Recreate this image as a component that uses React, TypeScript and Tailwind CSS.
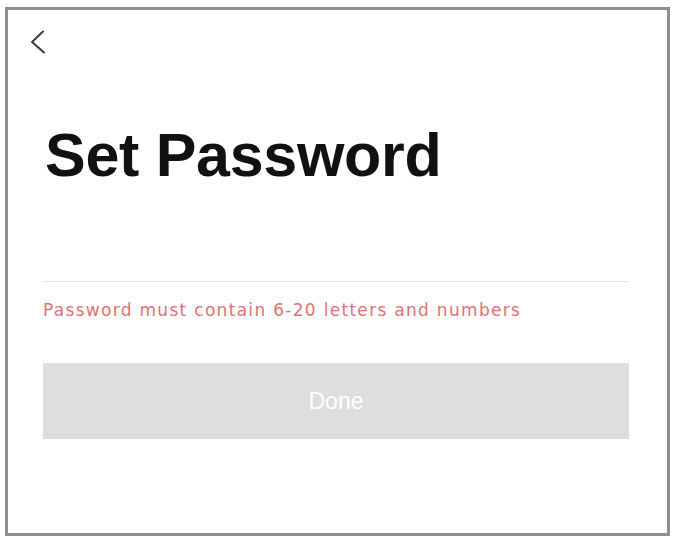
const App = () => {
  return (
    <div className="w-[673px] h-[537px] bg-white pt-[7px] pl-[5px]">
      <div className="w-[665px] h-[529px] border-[3px] border-[#8e8e8e] bg-white flex flex-col px-[35px]">
        <div className="mt-[20px] -ml-[14px] h-[24px]">
          <svg width="18" height="24" viewBox="0 0 18 24" fill="none">
            <path d="M14 1.5 L3 12 L15 22.5" stroke="#3a3a3a" strokeWidth="2" strokeLinecap="round" strokeLinejoin="round" />
          </svg>
        </div>
        <h1 className="mt-[71px] ml-[2px] text-[61px] leading-none font-bold text-[#111] tracking-[-0.3px] font-['Liberation_Sans',Arial,sans-serif]">
          Set Password
        </h1>
        <div className="mt-[95px] h-px bg-[#e4e4e4] w-[586px]"></div>
        <p className="mt-[20px] text-[17px] leading-none text-[#e27272] tracking-[1.3px] font-['DejaVu_Sans',Verdana,sans-serif]">
          Password must contain 6-20 letters and numbers
        </p>
        <button className="mt-[44px] h-[76px] w-[586px] bg-[#dededf] text-white text-[23px] font-['Liberation_Sans',Arial,sans-serif] flex items-center justify-center">
          Done
        </button>
      </div>
    </div>
  );
};

export default App;
